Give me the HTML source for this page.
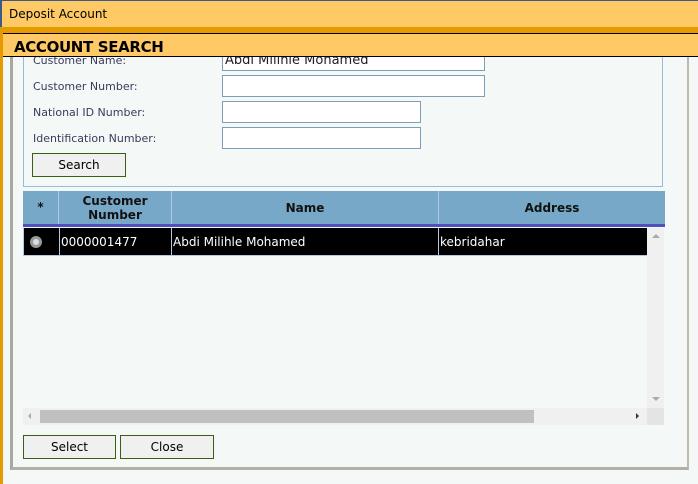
<!DOCTYPE html>
<html><head><style>
*{margin:0;padding:0;box-sizing:border-box}
body{width:698px;height:484px;position:relative;overflow:hidden;background:#f4f9f7;font-family:Tahoma,"DejaVu Sans","Liberation Sans",sans-serif;font-size:11px;color:#000}
.a{position:absolute}
.inp{position:absolute;background:#fff;border:1px solid #7f9db9;height:22px}
.lbl{position:absolute;left:33px;color:#3a3a5a;font-size:11px}
.btn{position:absolute;background:#f0f0f0;border:1px solid #3a5e12;text-align:center;font-size:12px;line-height:23px}
.th{position:absolute;top:191px;height:33px;border-right:1px solid #b4c8e0;font-weight:bold;font-size:12px;text-align:center;color:#111}
.td{position:absolute;top:228px;height:27px;line-height:28px;color:#fff;font-size:12px;border-right:1px solid #b4c8e0}
</style></head><body>
<div class="a" style="left:0;top:0;width:698px;height:27px;background:#ffc966;border-top:1px solid #3a5a8a;border-left:2px solid #3a5a8a"></div>
<div class="a" style="left:9px;top:7px;font-size:12px">Deposit Account</div>
<div class="a" style="left:0;top:27px;width:698px;height:6px;background:#e59a00"></div>
<div class="a" style="left:0;top:27px;width:3px;height:457px;background:#e59a00"></div>
<div class="a" style="left:10px;top:57px;width:679px;height:413px;border-left:3px solid #a8a8a0;border-right:2px solid #c0b8a8;border-bottom:3px solid #b0b0a8"></div>
<div class="a" style="left:23px;top:57px;width:640px;height:130px;border:1px solid #9ab8e0;border-top:none"></div>
<div class="lbl" style="top:54px">Customer Name:</div>
<div class="inp" style="left:222px;top:50px;width:263px;height:21px;font-size:13px;padding-left:2px;line-height:19px;color:#222">Abdi Milihle Mohamed</div>
<div class="a" style="left:3px;top:33px;width:695px;height:24px;background:#ffc966;border-top:1px solid #000;border-bottom:1px solid #000"></div>
<div class="a" style="left:14px;top:38px;font-size:15px;font-weight:bold;font-family:'DejaVu Sans',sans-serif;letter-spacing:-0.35px">ACCOUNT SEARCH</div>
<div class="lbl" style="top:80px">Customer Number:</div>
<div class="inp" style="left:222px;top:75px;width:263px"></div>
<div class="lbl" style="top:106px">National ID Number:</div>
<div class="inp" style="left:222px;top:101px;width:199px"></div>
<div class="lbl" style="top:132px">Identification Number:</div>
<div class="inp" style="left:222px;top:127px;width:199px"></div>
<div class="btn" style="left:32px;top:153px;width:94px;height:24px">Search</div>
<div class="a" style="left:23px;top:191px;width:642px;height:33px;background:#78a8c8"></div>
<div class="th" style="left:23px;width:36px;line-height:33px">*</div>
<div class="th" style="left:59px;width:113px;line-height:14px;padding-top:3px">Customer<br>Number</div>
<div class="th" style="left:172px;width:267px;line-height:34px">Name</div>
<div class="th" style="left:439px;width:226px;line-height:34px;border-right:none">Address</div>
<div class="a" style="left:23px;top:224px;width:642px;height:3px;background:#5050c0"></div>
<div class="a" style="left:23px;top:228px;width:624px;height:28px;background:#000;border-bottom:1px solid #b4c8e0;border-left:1px solid #b4c8e0"></div>
<div class="a" style="left:30px;top:236px;width:12px;height:12px;border-radius:50%;background:#ddd;border:3px solid #999"></div>
<div class="td" style="left:59px;width:113px;padding-left:1px;border-left:1px solid #b4c8e0">0000001477</div>
<div class="td" style="left:172px;width:267px;padding-left:1px">Abdi Milihle Mohamed</div>
<div class="td" style="left:439px;width:208px;padding-left:1px;border-right:none">kebridahar</div>
<div class="a" style="left:647px;top:228px;width:17px;height:180px;background:#f0f0f0"></div>
<div class="a" style="left:652px;top:234px;border:4px solid transparent;border-bottom:4px solid #aaa;border-top:none"></div>
<div class="a" style="left:652px;top:397px;border:4px solid transparent;border-top:4px solid #aaa;border-bottom:none"></div>
<div class="a" style="left:23px;top:408px;width:641px;height:17px;background:#f0f0f0"></div>
<div class="a" style="left:40px;top:410px;width:494px;height:13px;background:#c0c0c0"></div>
<div class="a" style="left:647px;top:408px;width:17px;height:17px;background:#e4e4e4"></div>
<div class="a" style="left:28px;top:413px;border:3px solid transparent;border-right:3px solid #aaa;border-left:none"></div>
<div class="a" style="left:636px;top:413px;border:3px solid transparent;border-left:3px solid #333;border-right:none"></div>
<div class="btn" style="left:23px;top:435px;width:93px;height:24px">Select</div>
<div class="btn" style="left:120px;top:435px;width:94px;height:24px">Close</div>
</body></html>
